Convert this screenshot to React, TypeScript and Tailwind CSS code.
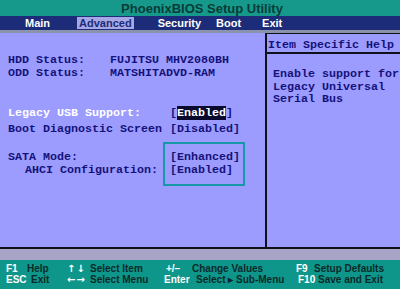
import React from "react";

const mono = { fontFamily: '"Liberation Mono", "DejaVu Sans Mono", monospace' };
const sans = { fontFamily: '"Liberation Sans", Arial, sans-serif' };
const arrows = { fontFamily: '"DejaVu Sans", sans-serif' };

export default function App() {
  return (
    <div className="w-[400px] h-[289px] flex flex-col overflow-hidden bg-[#9c9cff]">
      {/* Title */}
      <div
        className="h-[16px] bg-[#16998b] flex items-center justify-center text-[13px] font-bold text-[#073c38] leading-none pl-[4px]"
        style={sans}
      >
        PhoenixBIOS Setup Utility
      </div>
      {/* Menu */}
      <div className="h-[14px] bg-[#1c2c78] flex items-center text-[11px] font-bold text-white leading-none" style={sans}>
        <span className="ml-[25px]">Main</span>
        <span className="ml-[27px] bg-[#a6a8e6] text-[#1c2c78] px-[2px] h-[12px] flex items-center">Advanced</span>
        <span className="ml-[24px]">Security</span>
        <span className="ml-[15px]">Boot</span>
        <span className="ml-[21px]">Exit</span>
      </div>
      <div className="h-[3px] bg-[#8a92ac]" />
      {/* Main area */}
      <div className="h-[216px] flex border-b-2 border-[#101018]" style={mono}>
        <div className="w-[265px] pl-[8px] pt-[21px] text-[11.67px] font-bold text-[#14127a] leading-[12.5px] whitespace-pre">
          <div className="flex">
            <span className="w-[102px]">HDD Status:</span>
            <span>FUJITSU MHV2080BH</span>
          </div>
          <div className="flex">
            <span className="w-[102px]">ODD Status:</span>
            <span>MATSHITADVD-RAM</span>
          </div>
          <div className="flex mt-[28px] h-[16px]">
            <span className="w-[162px] text-white">Legacy USB Support:</span>
            <span>
              [<span className="bg-[#0a0a2e] text-white">Enabled</span>]
            </span>
          </div>
          <div className="flex">
            <span className="w-[162px]">Boot Diagnostic Screen</span>
            <span>[Disabled]</span>
          </div>
          <div className="flex mt-[6px]">
            <div className="w-[155px] pt-[9.75px]">
              <div>SATA Mode:</div>
              <div className="pl-[17px]">AHCI Configuration:</div>
            </div>
            <div className="w-[82px] h-[44px] border-2 border-[#1898a8] pl-[5px] pt-[7.75px]">
              <div>[Enhanced]</div>
              <div>[Enabled]</div>
            </div>
          </div>
        </div>
        <div className="w-[2px] bg-[#101018]" />
        <div className="flex-1 flex flex-col text-[11.67px] font-bold text-[#14127a] leading-[12.5px] whitespace-pre">
          <div className="h-[21px] border-t border-b-2 border-[#101018] pl-[1px] pt-[5px]">Item Specific Help</div>
          <div className="pl-[6px] pt-[14px]">
            <div>Enable support for</div>
            <div>Legacy Universal</div>
            <div>Serial Bus</div>
          </div>
        </div>
      </div>
      <div className="h-[11px] bg-[#a8a4c8]" />
      {/* Footer */}
      <div className="flex-1 bg-[#0f968a] text-[10px] font-bold leading-[11px] pt-[3px] text-[#0a2a2a]" style={sans}>
        <div className="flex h-[11px]">
          <span className="w-[21px] pl-[6px] box-content text-white">F1</span>
          <span className="w-[40px]">Help</span>
          <span className="w-[23px] text-white text-[10px] leading-[11px] tracking-[1px]" style={arrows}>↑↓</span>
          <span className="w-[74px]">Select Item</span>
          <span className="w-[28px] pl-[2px] text-white">+/−</span>
          <span className="w-[104px]">Change Values</span>
          <span className="w-[18px] text-white">F9</span>
          <span>Setup Defaults</span>
        </div>
        <div className="flex h-[11px]">
          <span className="w-[25px] pl-[6px] box-content text-white">ESC</span>
          <span className="w-[36px]">Exit</span>
          <span className="w-[23px] text-white text-[10px] leading-[11px] tracking-[1px]" style={arrows}>←→</span>
          <span className="w-[74px]">Select Menu</span>
          <span className="w-[32px] text-white">Enter</span>
          <span className="w-[102px]">Select ▸ Sub-Menu</span>
          <span className="w-[20px] text-white">F10</span>
          <span>Save and Exit</span>
        </div>
      </div>
    </div>
  );
}
